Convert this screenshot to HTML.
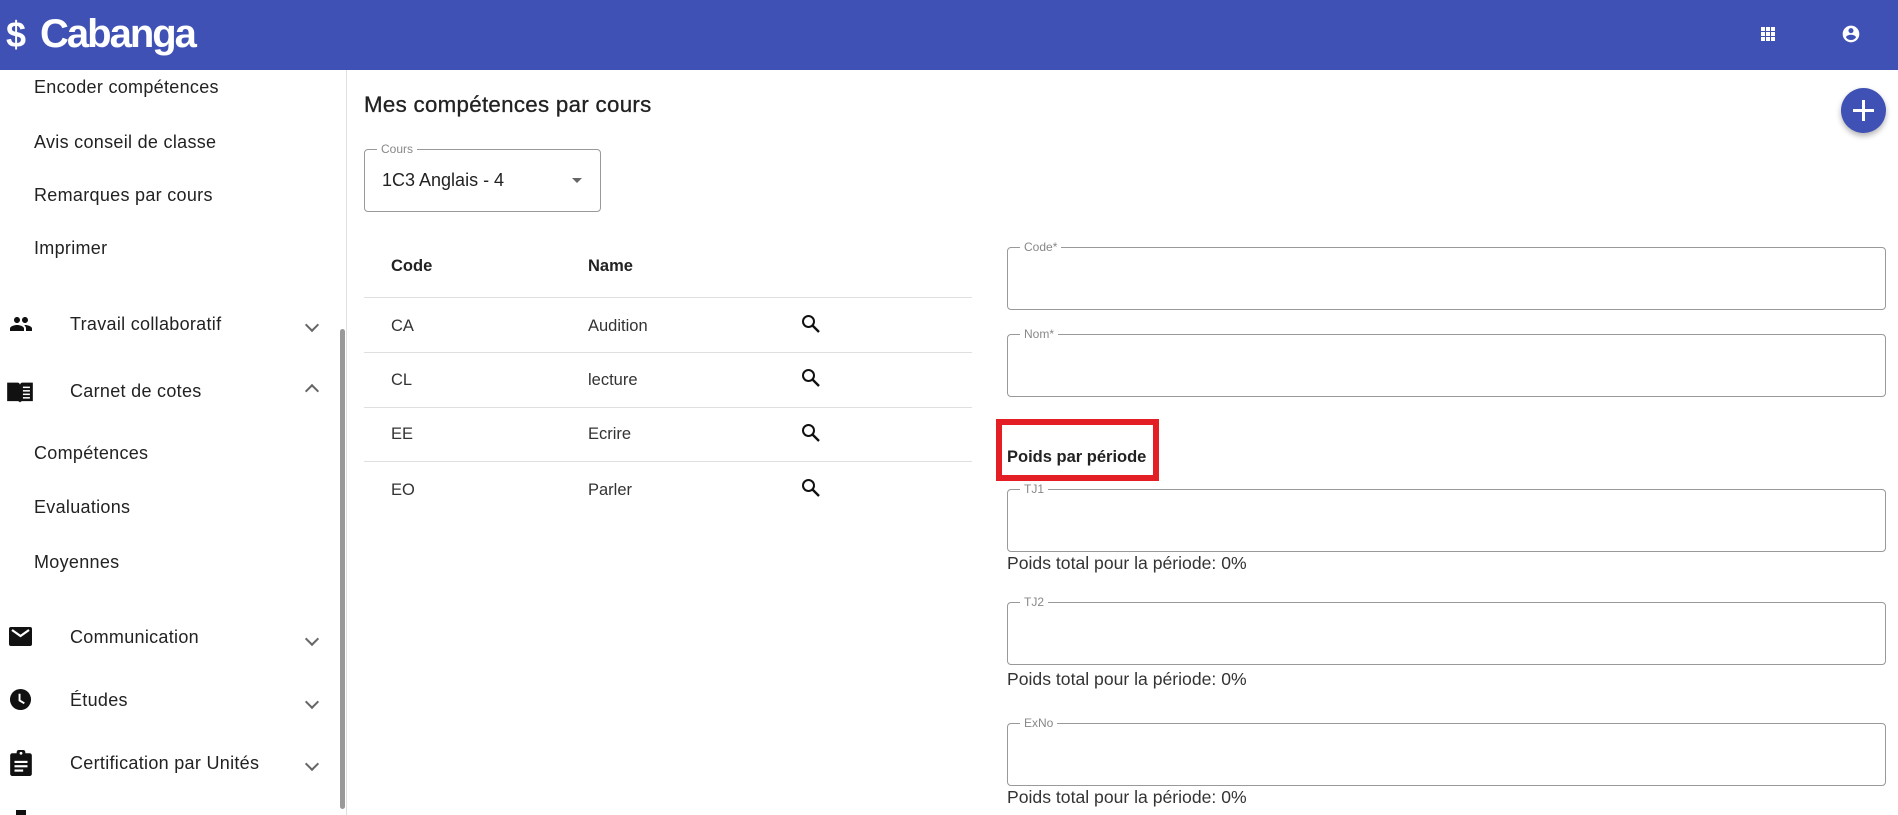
<!DOCTYPE html>
<html><head><meta charset="utf-8"><style>
*{margin:0;padding:0;box-sizing:border-box}
body{width:1898px;height:815px;overflow:hidden;background:#fff;font-family:"Liberation Sans",sans-serif;color:#222;position:relative}
.a{position:absolute;white-space:nowrap}
.hdr{position:absolute;left:0;top:0;width:1898px;height:70px;background:#3f51b5}
.si{font-size:18px;line-height:22px;color:#222;letter-spacing:0.3px}
.ic{position:absolute}
.chev{position:absolute;width:10px;height:10px;border-right:2px solid #666;border-bottom:2px solid #666}
.fld{position:absolute;border:1px solid #999;border-radius:4px}
.lbl{position:absolute;top:-8px;left:12px;background:#fff;padding:0 4px;font-size:12px;color:#888;line-height:14px}
.row{position:absolute;left:364px;width:608px;height:1px;background:#e0e0e0}
.td{font-size:16.5px;line-height:20px;color:#333}
.pt{font-size:17.6px;color:#333;line-height:20px}
</style></head><body>
<div class="hdr"></div>
<div class="a" style="left:6px;top:10px;color:#fff;font-size:36px;font-weight:bold;line-height:50px">$</div>
<div class="a" style="left:40px;top:9px;color:#fff;font-size:40px;font-weight:bold;line-height:50px;letter-spacing:-2px">Cabanga</div>
<svg class="ic" style="left:1760px;top:26px" width="16" height="16" viewBox="0 0 16 16" fill="#fff"><rect x="1" y="1" width="4" height="4"/><rect x="6" y="1" width="4" height="4"/><rect x="11" y="1" width="4" height="4"/><rect x="1" y="6" width="4" height="4"/><rect x="6" y="6" width="4" height="4"/><rect x="11" y="6" width="4" height="4"/><rect x="1" y="11" width="4" height="4"/><rect x="6" y="11" width="4" height="4"/><rect x="11" y="11" width="4" height="4"/></svg>
<svg class="ic" style="left:1841px;top:24px" width="20" height="20" viewBox="0 0 24 24" fill="#fff"><path d="M12 2C6.480 2 2 6.48 2 12s4.48 10 10 10 10-4.48 10-10S17.52 2 12 2zm0 3c1.66 0 3 1.34 3 3s-1.34 3-3 3-3-1.34-3-3 1.34-3 3-3zm0 14.2c-2.5 0-4.71-1.28-6-3.22.03-1.99 4-3.08 6-3.08 1.99 0 5.97 1.09 6 3.08-1.290 1.94-3.5 3.22-6 3.22z"/></svg>

<div style="position:absolute;left:346px;top:70px;width:1px;height:745px;background:#e0e0e0"></div>
<div style="position:absolute;left:340px;top:329px;width:5px;height:480px;background:#999;border-radius:3px"></div>

<div class="a si" style="left:34px;top:76px">Encoder compétences</div>
<div class="a si" style="left:34px;top:131px">Avis conseil de classe</div>
<div class="a si" style="left:34px;top:184px">Remarques par cours</div>
<div class="a si" style="left:34px;top:237px">Imprimer</div>

<svg class="ic" style="left:7px;top:312px" width="28" height="24" viewBox="0 0 24 24" fill="#111"><path d="M16 11c1.66 0 2.99-1.34 2.99-3S17.66 5 16 5c-1.66 0-3 1.34-3 3s1.34 3 3 3zm-8 0c1.66 0 2.99-1.34 2.99-3S9.66 5 8 5C6.34 5 5 6.34 5 8s1.34 3 3 3zm0 2c-2.33 0-7 1.17-7 3.5V19h14v-2.5c0-2.33-4.67-3.5-7-3.5zm8 0c-.29 0-.62.02-.97.05 1.16.84 1.97 1.970 1.97 3.45V19h6v-2.5c0-2.33-4.67-3.5-7-3.5z"/></svg>
<div class="a si" style="left:70px;top:313px">Travail collaboratif</div>
<div class="chev" style="left:307px;top:320px;transform:rotate(45deg)"></div>

<svg class="ic" style="left:6px;top:379px" width="28" height="26" viewBox="0 0 24 22" fill="#111"><path d="M1 3h9c1 0 2 1 2 2v15c-.5-.8-1.2-1.2-2-1.2H1z"/><path d="M23 3h-9c-1 0-2 1-2 2v15c.5-.8 1.2-1.2 2-1.2h9z"/><g stroke="#fff" stroke-width="1.3"><line x1="14.5" y1="7" x2="20.5" y2="7"/><line x1="14.5" y1="10" x2="20.5" y2="10"/><line x1="14.5" y1="13" x2="20.5" y2="13"/><line x1="14.5" y1="16" x2="20.5" y2="16"/></g></svg>
<div class="a si" style="left:70px;top:380px">Carnet de cotes</div>
<div class="chev" style="left:307px;top:386px;transform:rotate(225deg)"></div>

<div class="a si" style="left:34px;top:442px">Compétences</div>
<div class="a si" style="left:34px;top:496px">Evaluations</div>
<div class="a si" style="left:34px;top:551px">Moyennes</div>

<svg class="ic" style="left:9px;top:627px" width="24" height="20" viewBox="0 0 24 20"><rect x="0" y="0" width="23" height="19" rx="2" fill="#111"/><path d="M3 3l8.5 6L20 3" stroke="#fff" stroke-width="2.2" fill="none"/></svg>
<div class="a si" style="left:70px;top:626px">Communication</div>
<div class="chev" style="left:307px;top:634px;transform:rotate(45deg)"></div>

<svg class="ic" style="left:9px;top:688px" width="23" height="23" viewBox="0 0 24 24"><circle cx="12" cy="12" r="11" fill="#111"/><path d="M11 6v7l5 3" stroke="#fff" stroke-width="2" fill="none"/></svg>
<div class="a si" style="left:70px;top:689px">Études</div>
<div class="chev" style="left:307px;top:697px;transform:rotate(45deg)"></div>

<svg class="ic" style="left:10px;top:750px" width="22" height="26" viewBox="0 0 20 24"><rect x="0" y="3" width="20" height="21" rx="2" fill="#111"/><rect x="6" y="0" width="8" height="6" rx="2" fill="#111"/><circle cx="10" cy="3" r="1.3" fill="#fff"/><g stroke="#fff" stroke-width="2"><line x1="4" y1="11" x2="16" y2="11"/><line x1="4" y1="15" x2="16" y2="15"/><line x1="4" y1="19" x2="12" y2="19"/></g></svg>
<div class="a si" style="left:70px;top:752px">Certification par Unités</div>
<div class="chev" style="left:307px;top:759px;transform:rotate(45deg)"></div>
<svg class="ic" style="left:10px;top:810px" width="22" height="5" viewBox="0 0 22 5"><rect x="6" y="0" width="10" height="5" fill="#111"/></svg>

<div class="a" style="left:364px;top:92px;font-size:22.3px;line-height:26px;color:#222;letter-spacing:0.3px;-webkit-text-stroke:0.3px #222">Mes compétences par cours</div>
<div style="position:absolute;left:1841px;top:88px;width:45px;height:45px;border-radius:50%;background:#3f51b5;box-shadow:0 3px 6px rgba(0,0,0,.3)"></div>
<div style="position:absolute;left:1853px;top:109px;width:21px;height:3px;background:#fff"></div>
<div style="position:absolute;left:1862px;top:100px;width:3px;height:21px;background:#fff"></div>

<div class="fld" style="left:364px;top:149px;width:237px;height:63px"><span class="lbl" style="top:-8px">Cours</span></div>
<div class="a" style="left:382px;top:169px;font-size:18px;line-height:22px;color:#222">1C3 Anglais - 4</div>
<div style="position:absolute;left:572px;top:178px;width:0;height:0;border-left:5px solid transparent;border-right:5px solid transparent;border-top:5px solid #666"></div>

<div class="a td" style="left:391px;top:256px;font-weight:bold;color:#222">Code</div>
<div class="a td" style="left:588px;top:256px;font-weight:bold;color:#222">Name</div>
<div class="row" style="top:297px"></div>
<div class="row" style="top:352px"></div>
<div class="row" style="top:407px"></div>
<div class="row" style="top:461px"></div>
<div class="a td" style="left:391px;top:316px">CA</div><div class="a td" style="left:588px;top:316px">Audition</div>
<div class="a td" style="left:391px;top:370px">CL</div><div class="a td" style="left:588px;top:370px">lecture</div>
<div class="a td" style="left:391px;top:424px">EE</div><div class="a td" style="left:588px;top:424px">Ecrire</div>
<div class="a td" style="left:391px;top:480px">EO</div><div class="a td" style="left:588px;top:480px">Parler</div>
<svg class="ic" style="left:799px;top:312px" width="24" height="24" viewBox="0 0 24 24"><circle cx="9.5" cy="9.5" r="5.5" stroke="#111" stroke-width="2" fill="none"/><line x1="13.5" y1="13.5" x2="20" y2="20" stroke="#111" stroke-width="2.4"/></svg>
<svg class="ic" style="left:799px;top:366px" width="24" height="24" viewBox="0 0 24 24"><circle cx="9.5" cy="9.5" r="5.5" stroke="#111" stroke-width="2" fill="none"/><line x1="13.5" y1="13.5" x2="20" y2="20" stroke="#111" stroke-width="2.4"/></svg>
<svg class="ic" style="left:799px;top:421px" width="24" height="24" viewBox="0 0 24 24"><circle cx="9.5" cy="9.5" r="5.5" stroke="#111" stroke-width="2" fill="none"/><line x1="13.5" y1="13.5" x2="20" y2="20" stroke="#111" stroke-width="2.4"/></svg>
<svg class="ic" style="left:799px;top:476px" width="24" height="24" viewBox="0 0 24 24"><circle cx="9.5" cy="9.5" r="5.5" stroke="#111" stroke-width="2" fill="none"/><line x1="13.5" y1="13.5" x2="20" y2="20" stroke="#111" stroke-width="2.4"/></svg>

<div class="fld" style="left:1007px;top:247px;width:879px;height:63px"><span class="lbl">Code*</span></div>
<div class="fld" style="left:1007px;top:334px;width:879px;height:63px"><span class="lbl">Nom*</span></div>
<div style="position:absolute;left:996px;top:419px;width:163px;height:62px;border:6px solid #e31e24"></div>
<div class="a" style="left:1007px;top:446px;font-size:16.5px;line-height:22px;font-weight:bold;color:#222">Poids par période</div>
<div class="fld" style="left:1007px;top:489px;width:879px;height:63px"><span class="lbl">TJ1</span></div>
<div class="a pt" style="left:1007px;top:553px">Poids total pour la période: 0%</div>
<div class="fld" style="left:1007px;top:602px;width:879px;height:63px"><span class="lbl">TJ2</span></div>
<div class="a pt" style="left:1007px;top:669px">Poids total pour la période: 0%</div>
<div class="fld" style="left:1007px;top:723px;width:879px;height:63px"><span class="lbl">ExNo</span></div>
<div class="a pt" style="left:1007px;top:787px">Poids total pour la période: 0%</div>
</body></html>
